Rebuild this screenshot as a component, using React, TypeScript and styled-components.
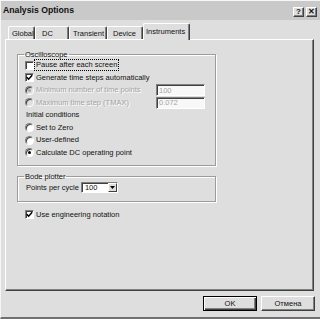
import { FC, ReactNode } from "react";
import styled, { createGlobalStyle } from "styled-components";

const GlobalStyle = createGlobalStyle`
  html, body {
    margin: 0;
    padding: 0;
    background: #dedede;
  }
  body {
    font-family: "Liberation Sans", Arial, sans-serif;
    font-size: 7.5px;
    color: #111;
  }
`;

const Window = styled.div`
  width: 320px;
  height: 319px;
  box-sizing: border-box;
  background: #dedede;
  border-top: 1px solid #f6f6f6;
  border-left: 1px solid #f6f6f6;
  border-bottom: 2px solid #707070;
  display: flex;
  flex-direction: column;
  overflow: hidden;
`;

const TitleBar = styled.div`
  height: 19px;
  flex-shrink: 0;
  background: #c9c9c9;
  display: flex;
  align-items: center;
  justify-content: space-between;
  padding: 0 3px 0 2px;
`;

const Title = styled.span`
  font-weight: bold;
  font-size: 8.7px;
  margin-top: -1px;
`;

const TitleButtons = styled.div`
  display: flex;
  gap: 2px;
  margin-top: 2px;
`;

const TitleButton = styled.div`
  width: 11px;
  height: 10px;
  box-sizing: border-box;
  background: #dedede;
  border: 1px solid;
  border-color: #fff #404040 #404040 #fff;
  box-shadow: inset -1px -1px 0 #808080;
  font-weight: bold;
  font-size: 8px;
  line-height: 1;
  display: flex;
  align-items: center;
  justify-content: center;
`;

const Body = styled.div`
  flex: 1;
  display: flex;
  flex-direction: column;
  padding: 3px 6px 0 4px;
`;

const TabStrip = styled.div`
  height: 16px;
  display: flex;
  align-items: flex-end;
  padding-left: 3px;
`;

const Tab = styled.div<{ $w: number; $pad: number; $active?: boolean }>`
  width: ${(p) => p.$w}px;
  height: ${(p) => (p.$active ? 17 : 13)}px;
  margin-bottom: ${(p) => (p.$active ? -1 : 0)}px;
  position: relative;
  z-index: ${(p) => (p.$active ? 2 : 1)};
  box-sizing: border-box;
  padding-left: ${(p) => p.$pad}px;
  padding-bottom: ${(p) => (p.$active ? 2 : 0)}px;
  background: #dedede;
  border-top: 1px solid #fff;
  border-left: 1px solid #fff;
  border-right: 1px solid #404040;
  box-shadow: inset -1px 0 0 #808080;
  border-radius: 2px 2px 0 0;
  display: flex;
  align-items: center;
  white-space: nowrap;
`;

const Panel = styled.div`
  height: 252px;
  box-sizing: border-box;
  border: 1px solid;
  border-color: #fff #404040 #404040 #fff;
  box-shadow: inset -1px -1px 0 #808080;
  padding: 10px 0 0 11px;
  display: flex;
  flex-direction: column;
  align-items: flex-start;
`;

const Group = styled.fieldset<{ $gap?: number }>`
  margin: ${(p) => p.$gap ?? 0}px 0 0 0;
  width: 199px;
  box-sizing: border-box;
  padding: 0 10px 6px 7px;
  border: 1px solid #9c9c9c;
  box-shadow: 1px 1px 0 #fff, inset 1px 1px 0 #fff;
  min-inline-size: auto;
`;

const Legend = styled.legend`
  padding: 0 1px;
  margin-left: -1px;
  line-height: 9px;
`;

const Row = styled.div<{ $h?: number; $indent?: number; $mt?: number }>`
  height: ${(p) => p.$h ?? 12.5}px;
  margin-top: ${(p) => p.$mt ?? 0}px;
  display: flex;
  align-items: center;
  padding-left: ${(p) => p.$indent ?? 0}px;
  white-space: nowrap;
`;

const Label = styled.span<{ $disabled?: boolean; $focus?: boolean }>`
  color: ${(p) => (p.$disabled ? "#a4a4a4" : "#111")};
  text-shadow: ${(p) => (p.$disabled ? "1px 1px 0 #fff" : "none")};
  outline: ${(p) => (p.$focus ? "1px dotted #000" : "none")};
  outline-offset: 0;
  padding: 0 1px;
  line-height: 10px;
`;

const Box = styled.span<{ $round?: boolean; $disabled?: boolean }>`
  width: 9px;
  height: 9px;
  box-sizing: border-box;
  margin-right: 1px;
  flex-shrink: 0;
  background: ${(p) => (p.$disabled ? "#dedede" : "#fff")};
  border: 1px solid;
  border-color: #808080 #fff #fff #808080;
  box-shadow: inset 1px 1px 0 #404040;
  border-radius: ${(p) => (p.$round ? "50%" : "0")};
  display: flex;
  align-items: center;
  justify-content: center;
`;

const Dot = styled.span<{ $disabled?: boolean }>`
  width: 3px;
  height: 3px;
  border-radius: 50%;
  background: ${(p) => (p.$disabled ? "#a4a4a4" : "#000")};
`;

const Edit = styled.div`
  margin-left: auto;
  width: 49px;
  height: 12px;
  box-sizing: border-box;
  background: #f8f8f8;
  border: 1px solid;
  border-color: #808080 #fff #fff #808080;
  box-shadow: inset 1px 1px 0 #404040;
  color: #a4a4a4;
  padding-left: 2px;
  display: flex;
  align-items: center;
`;

const Select = styled.div`
  margin-left: 1px;
  width: 37px;
  height: 11px;
  box-sizing: border-box;
  background: #fff;
  border: 1px solid;
  border-color: #808080 #fff #fff #808080;
  box-shadow: inset 1px 1px 0 #404040;
  display: flex;
  align-items: center;
  justify-content: space-between;
  padding-left: 3px;
`;

const SelectArrow = styled.span`
  width: 9px;
  height: 9px;
  box-sizing: border-box;
  background: #dedede;
  border: 1px solid;
  border-color: #fff #404040 #404040 #fff;
  display: flex;
  align-items: center;
  justify-content: center;
`;

const Footer = styled.div`
  display: flex;
  justify-content: flex-end;
  gap: 4px;
  margin: 5px -1px 0 0;
`;

const Button = styled.button<{ $default?: boolean }>`
  width: 54px;
  height: 15px;
  padding: 0;
  font-family: "Liberation Sans", Arial, sans-serif;
  font-size: 7.5px;
  color: #111;
  background: #dedede;
  border: 1px solid;
  border-color: ${(p) =>
    p.$default ? "#000" : "#fff #404040 #404040 #fff"};
  box-shadow: ${(p) =>
    p.$default
      ? "inset 1px 1px 0 #fff, inset -1px -1px 0 #404040, inset -2px -2px 0 #808080"
      : "inset -1px -1px 0 #808080"};
`;

const Check: FC<{ checked?: boolean }> = ({ checked }) => (
  <Box>
    {checked && (
      <svg width="7" height="7" viewBox="0 0 7 7">
        <polyline points="0.8,3.2 2.6,5.2 6.2,1.2" fill="none" stroke="#000" strokeWidth="1.5" />
      </svg>
    )}
  </Box>
);

const Radio: FC<{ checked?: boolean; disabled?: boolean }> = ({ checked, disabled }) => (
  <Box $round $disabled={disabled}>
    {checked && <Dot $disabled={disabled} />}
  </Box>
);

const tabs = [
  { name: "Global", w: 27, pad: 3 },
  { name: "DC", w: 34, pad: 6 },
  { name: "Transient", w: 38, pad: 3 },
  { name: "Device", w: 36, pad: 5 },
  { name: "Instruments", w: 47, pad: 2, active: true },
];

const OptionRow: FC<{ control: ReactNode; children: ReactNode; disabled?: boolean; focus?: boolean; extra?: ReactNode }> = ({
  control,
  children,
  disabled,
  focus,
  extra,
}) => (
  <Row>
    {control}
    <Label $disabled={disabled} $focus={focus}>
      {children}
    </Label>
    {extra}
  </Row>
);

export default function App() {
  return (
    <>
      <GlobalStyle />
      <Window>
        <TitleBar>
          <Title>Analysis Options</Title>
          <TitleButtons>
            <TitleButton>?</TitleButton>
            <TitleButton>✕</TitleButton>
          </TitleButtons>
        </TitleBar>
        <Body>
          <TabStrip>
            {tabs.map((t) => (
              <Tab key={t.name} $w={t.w} $pad={t.pad} $active={t.active}>
                {t.name}
              </Tab>
            ))}
          </TabStrip>
          <Panel>
            <Group>
              <Legend>Oscilloscope</Legend>
              <OptionRow control={<Check />} focus>
                Pause after each screen
              </OptionRow>
              <OptionRow control={<Check checked />}>Generate time steps automatically</OptionRow>
              <OptionRow control={<Radio checked disabled />} disabled extra={<Edit>100</Edit>}>
                Minimum number of time points
              </OptionRow>
              <OptionRow control={<Radio disabled />} disabled extra={<Edit>0.072</Edit>}>
                Maximum time step (TMAX)
              </OptionRow>
              <Row>
                <Label>Initial conditions</Label>
              </Row>
              <OptionRow control={<Radio />}>Set to Zero</OptionRow>
              <OptionRow control={<Radio />}>User-defined</OptionRow>
              <OptionRow control={<Radio checked />}>Calculate DC operating point</OptionRow>
            </Group>
            <Group $gap={5.5}>
              <Legend>Bode plotter</Legend>
              <Row $h={14}>
                <Label>Points per cycle</Label>
                <Select>
                  100
                  <SelectArrow>
                    <svg width="5" height="3" viewBox="0 0 5 3">
                      <polygon points="0,0 5,0 2.5,3" fill="#000" />
                    </svg>
                  </SelectArrow>
                </Select>
              </Row>
            </Group>
            <Row $indent={8} $mt={7}>
              <Check checked />
              <Label>Use engineering notation</Label>
            </Row>
          </Panel>
          <Footer>
            <Button $default>OK</Button>
            <Button>Отмена</Button>
          </Footer>
        </Body>
      </Window>
    </>
  );
}
